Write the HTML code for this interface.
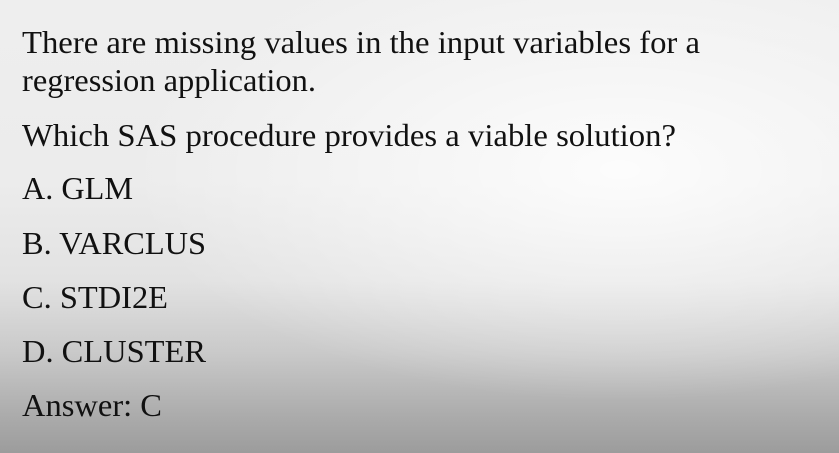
<!DOCTYPE html>
<html><head><style>
html,body{margin:0;padding:0;}
body{width:839px;height:453px;overflow:hidden;position:relative;
background:
radial-gradient(ellipse 700px 330px at 620px 170px, rgba(255,255,255,0.85), rgba(255,255,255,0) 70%),
linear-gradient(to bottom,#eeeeee 0%,#ececec 40%,#e2e2e2 62%,#c9c9c9 78%,#ababab 92%,#9c9c9c 100%);}
svg{position:absolute;left:0;top:0;}
text{font-family:"Liberation Serif",serif;font-size:32px;fill:#111;}
</style></head><body>
<svg width="839" height="453">
<text x="22" y="53" textLength="678" lengthAdjust="spacingAndGlyphs">There are missing values in the input variables for a</text>
<text x="22" y="91" textLength="294" lengthAdjust="spacingAndGlyphs">regression application.</text>
<text x="22" y="146" textLength="654" lengthAdjust="spacingAndGlyphs">Which SAS procedure provides a viable solution?</text>
<text x="22" y="199" textLength="111" lengthAdjust="spacingAndGlyphs">A. GLM</text>
<text x="22" y="254" textLength="184" lengthAdjust="spacingAndGlyphs">B. VARCLUS</text>
<text x="22" y="308" textLength="146" lengthAdjust="spacingAndGlyphs">C. STDI2E</text>
<text x="22" y="362" textLength="184" lengthAdjust="spacingAndGlyphs">D. CLUSTER</text>
<text x="22" y="416" textLength="140" lengthAdjust="spacingAndGlyphs">Answer: C</text>
</svg>
</body></html>
